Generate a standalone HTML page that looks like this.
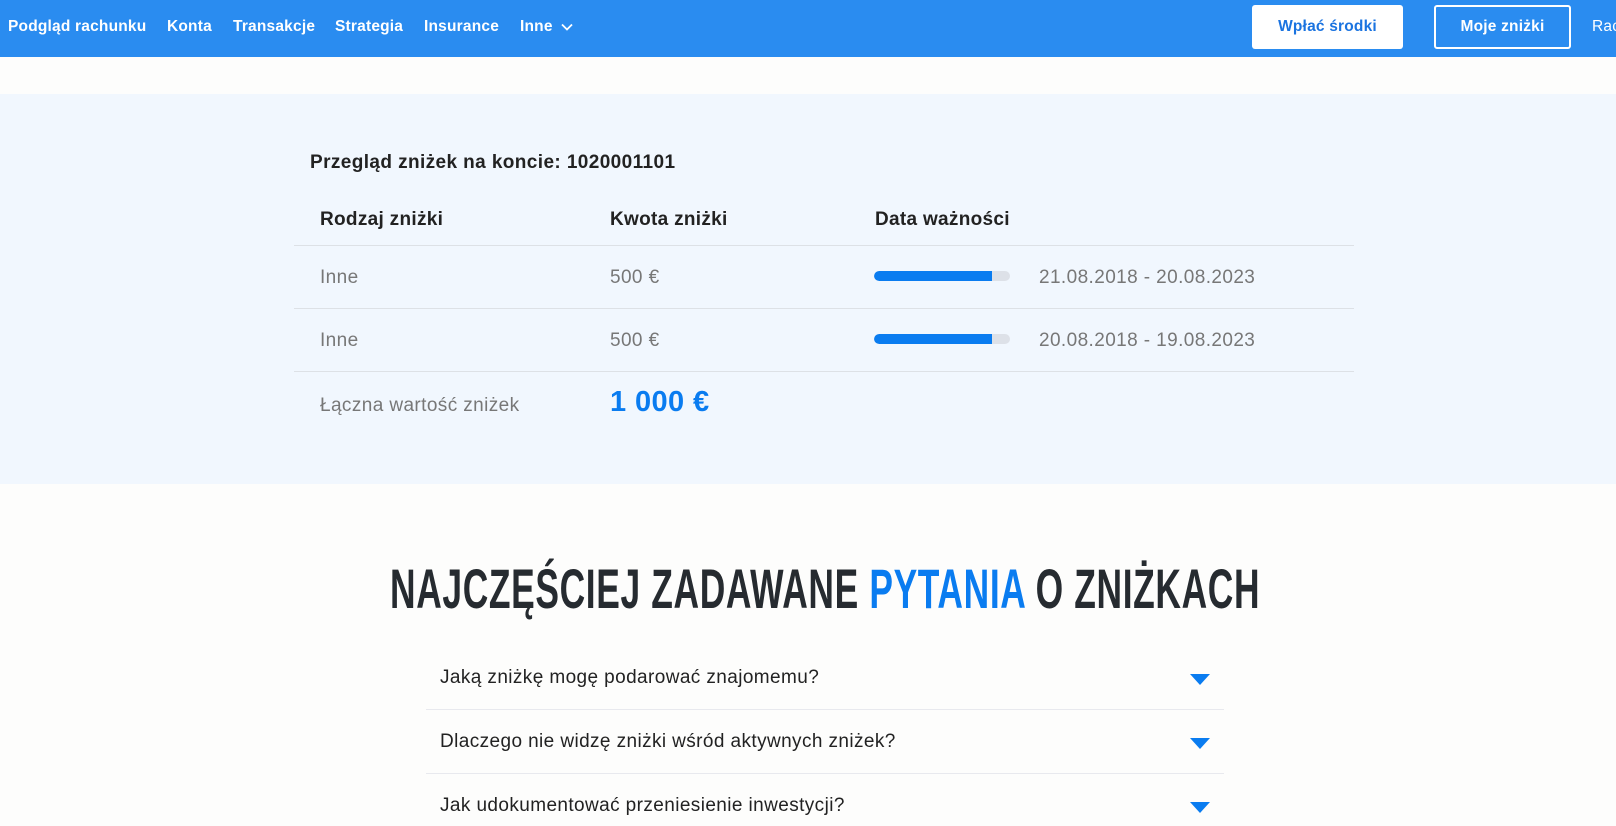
<!DOCTYPE html>
<html><head><meta charset="utf-8"><style>
*{margin:0;padding:0;box-sizing:border-box}
body{width:1616px;height:826px;overflow:hidden;background:#fdfdfc;font-family:"Liberation Sans",Arial,sans-serif;position:relative}
.a{position:absolute;white-space:nowrap}
.nav{position:absolute;left:0;top:0;width:1616px;height:57px;background:#2a8cf0}
.nav .i{position:absolute;top:18px;color:#fff;font-weight:bold;font-size:15.5px;letter-spacing:0.2px}
.btn{position:absolute;top:5px;height:44px;border-radius:3px;font-weight:bold;font-size:15.5px;text-align:center;line-height:44px;letter-spacing:0.2px}
.sec{position:absolute;left:0;top:94px;width:1616px;height:390px;background:#f1f7fe}
.hl{position:absolute;left:294px;width:1060px;height:1px;background:#dde1e6}
.th{font-weight:bold;font-size:19px;color:#222;letter-spacing:0.3px}
.td{font-size:19px;color:#777;letter-spacing:0.4px}
.bar{position:absolute;left:874px;width:136px;height:10px;border-radius:5px;background:#dde1e8;overflow:hidden}
.bar i{display:block;width:118px;height:10px;background:#0a7cf0;border-radius:5px 0 0 5px}
.q{font-size:19px;color:#222;left:440px;letter-spacing:0.4px}
.tri{position:absolute;left:1190px;width:0;height:0;border-left:10px solid transparent;border-right:10px solid transparent;border-top:11px solid #0a7cf0}
.fl{position:absolute;left:426px;width:798px;height:1px;background:#e8e9ee}
</style></head><body>
<div class="nav">
<span class="i" style="left:8px">Podgląd rachunku</span>
<span class="i" style="left:167px">Konta</span>
<span class="i" style="left:233px">Transakcje</span>
<span class="i" style="left:335px">Strategia</span>
<span class="i" style="left:424px">Insurance</span>
<span class="i" style="left:520px">Inne <svg width="12" height="8" viewBox="0 0 12 8" style="margin-left:4px"><path d="M1 1.5l5 5 5-5" stroke="#fff" stroke-width="1.8" fill="none"/></svg></span>
<div class="btn" style="left:1252px;width:151px;background:#fff;color:#1a73e0">Wpłać środki</div>
<div class="btn" style="left:1434px;width:137px;border:2px solid #fff;color:#fff;line-height:40px">Moje zniżki</div>
<span class="i" style="left:1592px;font-weight:normal">Rac</span>
</div>
<div class="sec"></div>
<div class="a" style="left:310px;top:152px;font-size:19px;font-weight:bold;color:#222;letter-spacing:0.4px">Przegląd zniżek na koncie: 1020001101</div>
<div class="a th" style="left:320px;top:209px">Rodzaj zniżki</div>
<div class="a th" style="left:610px;top:209px">Kwota zniżki</div>
<div class="a th" style="left:875px;top:209px">Data ważności</div>
<div class="hl" style="top:245px"></div>
<div class="a td" style="left:320px;top:267px">Inne</div>
<div class="a td" style="left:610px;top:267px">500 €</div>
<div class="bar" style="top:271px"><i></i></div>
<div class="a td" style="left:1039px;top:267px">21.08.2018 - 20.08.2023</div>
<div class="hl" style="top:308px"></div>
<div class="a td" style="left:320px;top:330px">Inne</div>
<div class="a td" style="left:610px;top:330px">500 €</div>
<div class="bar" style="top:334px"><i></i></div>
<div class="a td" style="left:1039px;top:330px">20.08.2018 - 19.08.2023</div>
<div class="hl" style="top:371px"></div>
<div class="a td" style="left:320px;top:395px">Łączna wartość zniżek</div>
<div class="a" style="left:610px;top:386px;font-size:29px;font-weight:bold;color:#0a7cf0;letter-spacing:0.4px">1 000 €</div>
<div class="a" style="left:390px;top:557px;width:869px;font-size:56px;font-weight:bold;color:#262b30;line-height:64px"><span style="display:inline-block;transform:scaleX(0.632);transform-origin:left;letter-spacing:1px">NAJCZĘŚCIEJ ZADAWANE <span style="color:#0a7cf0">PYTANIA</span> O ZNIŻKACH</span></div>
<div class="a q" style="top:667px">Jaką zniżkę mogę podarować znajomemu?</div>
<div class="tri" style="top:674px"></div>
<div class="fl" style="top:709px"></div>
<div class="a q" style="top:731px">Dlaczego nie widzę zniżki wśród aktywnych zniżek?</div>
<div class="tri" style="top:738px"></div>
<div class="fl" style="top:773px"></div>
<div class="a q" style="top:795px">Jak udokumentować przeniesienie inwestycji?</div>
<div class="tri" style="top:802px"></div>
</body></html>
